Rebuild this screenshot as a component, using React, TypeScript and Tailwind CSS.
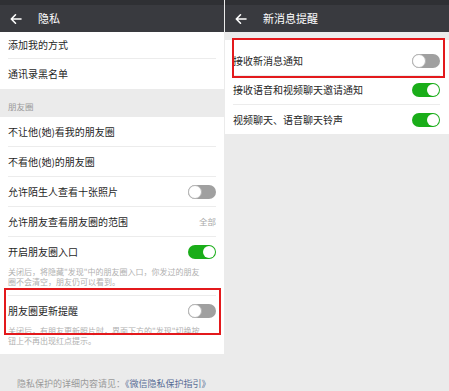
import React from "react";

const font = { fontFamily: '"Noto Sans CJK SC", "Noto Sans", sans-serif' };

function Toggle({ on }: { on: boolean }) {
  return on ? (
    <div className="w-[28px] h-[14px] rounded-full bg-[#1aad19] relative shrink-0">
      <div className="absolute right-[1px] top-[1px] w-[12px] h-[12px] rounded-full bg-white" />
    </div>
  ) : (
    <div className="w-[28px] h-[14px] rounded-full bg-[#a0a0a0] relative shrink-0">
      <div className="absolute left-0 top-0 w-[14px] h-[14px] rounded-full bg-white border border-[#b5b5b5]" />
    </div>
  );
}

function Arrow() {
  return (
    <svg width="12" height="12" viewBox="0 0 12 12" fill="none" stroke="white" strokeWidth="1.6" strokeLinecap="round" strokeLinejoin="round">
      <path d="M11 6H1.5M5.5 1.8L1.3 6l4.2 4.2" />
    </svg>
  );
}

function Header({ title }: { title: string }) {
  return (
    <div className="h-[32px] bg-[#393a3f] flex items-center shrink-0 border-t-[5px] border-[#2f3034]">
      <div className="ml-[10px] flex items-center"><Arrow /></div>
      <div className="ml-[16px] text-[11px] text-white leading-none">{title}</div>
    </div>
  );
}

function Row({ h, text, right, divider = true, pr = "pr-[8px]" }: { h: string; text: string; right?: React.ReactNode; divider?: boolean; pr?: string }) {
  return (
    <div className={`pl-[8px] ${pr} bg-white`}>
      <div className={`${h} flex items-center justify-between ${divider ? "border-b border-[#ececec]" : ""}`}>
        <span className="text-[10px] text-[#1f1f1f] leading-none">{text}</span>
        {right}
      </div>
    </div>
  );
}

export default function App() {
  return (
    <div className="w-[449px] h-[391px] flex bg-[#ebebeb] overflow-hidden" style={font}>
      {/* Left panel */}
      <div className="w-[224px] flex flex-col relative">
        <Header title="隐私" />
        <Row h="h-[27px]" text="添加我的方式" />
        <Row h="h-[30px]" text="通讯录黑名单" divider={false} />
        <div className="h-[28px] pl-[8px] pt-[13px] text-[8.5px] text-[#9a9a9a] leading-none">朋友圈</div>
        <Row h="h-[30px]" text="不让他(她)看我的朋友圈" />
        <Row h="h-[30px]" text="不看他(她)的朋友圈" />
        <Row h="h-[30px]" text="允许陌生人查看十张照片" right={<Toggle on={false} />} />
        <Row h="h-[30px]" text="允许朋友查看朋友圈的范围" right={<span className="text-[8.5px] text-[#a8a8a8] leading-none">全部</span>} />
        <div className="bg-white pl-[8px] pr-[8px]">
          <div className="border-b border-[#ececec] pb-[8px]">
            <div className="h-[30px] flex items-center justify-between">
              <span className="text-[10px] text-[#1f1f1f] leading-none">开启朋友圈入口</span>
              <Toggle on />
            </div>
            <div className="text-[8px] leading-[10px] text-[#b0b0b0] whitespace-nowrap">
              关闭后，将隐藏"发现"中的朋友圈入口，你发过的朋友
              <br />
              圈不会清空，朋友仍可以看到。
            </div>
          </div>
        </div>
        <div className="bg-white pl-[8px] pr-[8px]">
          <div className="pb-[8px]">
            <div className="h-[30px] flex items-center justify-between">
              <span className="text-[10px] text-[#1f1f1f] leading-none">朋友圈更新提醒</span>
              <Toggle on={false} />
            </div>
            <div className="text-[8px] leading-[10px] text-[#b0b0b0] whitespace-nowrap">
              关闭后，有朋友更新照片时，界面下方的"发现"切换按
              <br />
              钮上不再出现红点提示。
            </div>
          </div>
        </div>
        <div className="mt-[25px] pl-[17px] text-[9px] leading-none text-[#9a9a9a] whitespace-nowrap">
          隐私保护的详细内容请见：<span className="text-[#576b95]">《微信隐私保护指引》</span>
        </div>
        <div className="absolute left-[4px] top-[288px] w-[217px] h-[47px] border-2 border-[#e3191c]" />
      </div>

      {/* Right panel */}
      <div className="flex-1 flex flex-col relative ml-[1px]">
        <Header title="新消息提醒" />
        <div className="h-[8px]" />
        <div className="bg-white pt-[7px]">
          <Row h="h-[29px]" text="接收新消息通知" right={<Toggle on={false} />} pr="pr-[9px]" />
          <Row h="h-[29px]" text="接收语音和视频聊天邀请通知" right={<Toggle on />} pr="pr-[9px]" />
          <Row h="h-[29px]" text="视频聊天、语音聊天铃声" right={<Toggle on />} divider={false} pr="pr-[9px]" />
        </div>
        <div className="absolute left-[7px] top-[38px] w-[213px] h-[40px] border-2 border-[#e3191c]" />
      </div>
    </div>
  );
}
